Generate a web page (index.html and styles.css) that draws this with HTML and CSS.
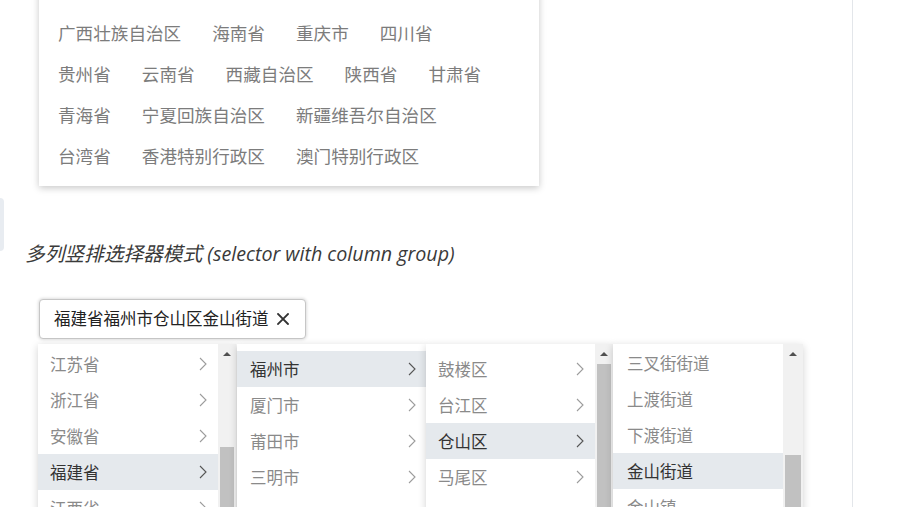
FILE: index.html
```html
<!DOCTYPE html>
<html lang="zh-CN">
<head>
<meta charset="utf-8">
<title>多列竖排选择器模式</title>
<link rel="stylesheet" href="styles.css">
</head>
<body>
<div class="page">
  <main class="content">
    <div class="card">
      <div class="card-row"><span class="opt">广西壮族自治区</span><span class="opt">海南省</span><span class="opt">重庆市</span><span class="opt">四川省</span></div>
      <div class="card-row"><span class="opt">贵州省</span><span class="opt">云南省</span><span class="opt">西藏自治区</span><span class="opt">陕西省</span><span class="opt">甘肃省</span></div>
      <div class="card-row"><span class="opt">青海省</span><span class="opt">宁夏回族自治区</span><span class="opt">新疆维吾尔自治区</span></div>
      <div class="card-row"><span class="opt">台湾省</span><span class="opt">香港特别行政区</span><span class="opt">澳门特别行政区</span></div>
    </div>

    <section class="section">
      <div class="edge-tab"></div>
      <div class="sec-body">
        <h3 class="title">多列竖排选择器模式 (selector with column group)</h3>
        <div class="tag-line">
          <div class="tag">
            <span class="tag-text">福建省福州市仓山区金山街道</span>
            <svg class="tag-x" width="12" height="12" viewBox="0 0 12 12"><path d="M1 1 L11 11 M11 1 L1 11" stroke="#333" stroke-width="1.8" fill="none" stroke-linecap="square"/></svg>
          </div>
        </div>

        <div class="columns">
          <div class="col col-1">
            <div class="list list-1">
              <div class="item"><span>江苏省</span><svg class="chev" width="8" height="14" viewBox="0 0 8 14"><path d="M1 1 L7 7 L1 13" fill="none" stroke-width="1.1"/></svg></div>
              <div class="item"><span>浙江省</span><svg class="chev" width="8" height="14" viewBox="0 0 8 14"><path d="M1 1 L7 7 L1 13" fill="none" stroke-width="1.1"/></svg></div>
              <div class="item"><span>安徽省</span><svg class="chev" width="8" height="14" viewBox="0 0 8 14"><path d="M1 1 L7 7 L1 13" fill="none" stroke-width="1.1"/></svg></div>
              <div class="item active"><span>福建省</span><svg class="chev" width="8" height="14" viewBox="0 0 8 14"><path d="M1 1 L7 7 L1 13" fill="none" stroke-width="1.1"/></svg></div>
              <div class="item"><span>江西省</span><svg class="chev" width="8" height="14" viewBox="0 0 8 14"><path d="M1 1 L7 7 L1 13" fill="none" stroke-width="1.1"/></svg></div>
            </div>
            <div class="sbar"><div class="sbar-up"><i class="tri"></i></div><div class="thumb thumb-1"></div></div>
          </div>

          <div class="col col-2">
            <div class="list list-2">
              <div class="item active"><span>福州市</span><svg class="chev" width="8" height="14" viewBox="0 0 8 14"><path d="M1 1 L7 7 L1 13" fill="none" stroke-width="1.1"/></svg></div>
              <div class="item"><span>厦门市</span><svg class="chev" width="8" height="14" viewBox="0 0 8 14"><path d="M1 1 L7 7 L1 13" fill="none" stroke-width="1.1"/></svg></div>
              <div class="item"><span>莆田市</span><svg class="chev" width="8" height="14" viewBox="0 0 8 14"><path d="M1 1 L7 7 L1 13" fill="none" stroke-width="1.1"/></svg></div>
              <div class="item"><span>三明市</span><svg class="chev" width="8" height="14" viewBox="0 0 8 14"><path d="M1 1 L7 7 L1 13" fill="none" stroke-width="1.1"/></svg></div>
            </div>
          </div>

          <div class="col col-3">
            <div class="list list-3">
              <div class="item"><span>鼓楼区</span><svg class="chev" width="8" height="14" viewBox="0 0 8 14"><path d="M1 1 L7 7 L1 13" fill="none" stroke-width="1.1"/></svg></div>
              <div class="item"><span>台江区</span><svg class="chev" width="8" height="14" viewBox="0 0 8 14"><path d="M1 1 L7 7 L1 13" fill="none" stroke-width="1.1"/></svg></div>
              <div class="item active"><span>仓山区</span><svg class="chev" width="8" height="14" viewBox="0 0 8 14"><path d="M1 1 L7 7 L1 13" fill="none" stroke-width="1.1"/></svg></div>
              <div class="item"><span>马尾区</span><svg class="chev" width="8" height="14" viewBox="0 0 8 14"><path d="M1 1 L7 7 L1 13" fill="none" stroke-width="1.1"/></svg></div>
            </div>
            <div class="sbar"><div class="sbar-up"><i class="tri"></i></div><div class="thumb thumb-3"></div></div>
          </div>

          <div class="col col-4">
            <div class="list list-4">
              <div class="item leaf"><span>三叉街街道</span></div>
              <div class="item leaf"><span>上渡街道</span></div>
              <div class="item leaf"><span>下渡街道</span></div>
              <div class="item leaf active"><span>金山街道</span></div>
              <div class="item leaf"><span>金山镇</span></div>
            </div>
            <div class="sbar sbar-wide"><div class="sbar-up"><i class="tri"></i></div><div class="thumb thumb-4"></div></div>
          </div>
        </div>
      </div>
    </section>
  </main>
  <aside class="side"></aside>
</div>
</body>
</html>
```

FILE: styles.css
```css
* { box-sizing: border-box; }

html, body {
  margin: 0;
  padding: 0;
  background: #fff;
  overflow: hidden;
}

body {
  font-family: "Noto Sans CJK SC", "Noto Sans", sans-serif;
}

.page {
  display: flex;
  height: 507px;
  overflow: hidden;
}

.content {
  width: 853px;
  flex: none;
  border-right: 1px solid #e3e6ea;
  height: 507px;
  overflow: hidden;
}

.side {
  flex: 1;
  background: #fff;
}

/* top card */
.card {
  margin: -20px 0 0 39px;
  width: 500px;
  padding: 32.5px 19px 9px;
  background: #fff;
  box-shadow: 0 2px 7px rgba(0, 0, 0, 0.22);
}

.card-row {
  display: flex;
  height: 41px;
  align-items: center;
  white-space: nowrap;
}

.opt {
  font-size: 17.6px;
  color: #7c7c7c;
  margin-right: 31px;
  line-height: 1;
}

/* section */
.section {
  display: flex;
}

.edge-tab {
  flex: none;
  width: 4px;
  height: 53px;
  margin-top: 12px;
  background: #e8ecf1;
  border-radius: 0 5px 5px 0;
}

.sec-body {
  flex: 1;
  padding-left: 21px;
  padding-top: 55px;
}

.title {
  margin: 0 0 32px;
  font-family: "Open Sans", "Noto Sans CJK SC", sans-serif;
  font-style: italic;
  font-weight: 400;
  font-size: 19.7px;
  line-height: 26px;
  color: #3a3a3a;
}

.tag-line {
  display: flex;
  padding-left: 14px;
}

.tag {
  display: flex;
  align-items: center;
  gap: 8px;
  height: 40px;
  padding: 0 16px 0 14px;
  border: 1px solid #c6c6c6;
  border-radius: 4px;
  background: #fff;
  box-shadow: 0 0 3px 1px rgba(0, 0, 0, 0.13);
}

.tag-text {
  font-size: 16.5px;
  color: #222;
  line-height: 1;
}

.tag-x { flex: none; }

/* column group */
.columns {
  display: flex;
  align-items: flex-start;
  margin-top: 5px;
  margin-left: 13px;
}

.col {
  display: flex;
  height: 190px;
  background: #fff;
  box-shadow: 0 2px 8px rgba(0, 0, 0, 0.18);
}

.col-1 { width: 198px; margin-right: 1px; }
.col-2 { width: 189px; }
.col-3 { width: 187px; }
.col-4 { width: 190px; }

.list {
  flex: 1;
  overflow: hidden;
}

.list-1 { padding-top: 2px; }
.list-2 { padding-top: 7px; }
.list-3 { padding-top: 7px; }
.list-4 { padding-top: 1px; }

.item {
  display: flex;
  align-items: center;
  justify-content: space-between;
  height: 36px;
  padding: 0 11px 0 12px;
  font-size: 16.5px;
  color: #8a8a8a;
  white-space: nowrap;
}

.col-2 .item { padding-left: 13px; padding-right: 10px; }
.col-4 .item { padding-left: 14px; }

.item .chev path { stroke: #9c9c9c; }

.item.active {
  background: #e5e9ed;
  color: #333;
}

.item.active .chev path { stroke: #555; }

/* fake scrollbars */
.sbar {
  flex: none;
  width: 18px;
  background: #f1f1f1;
  display: flex;
  flex-direction: column;
  align-items: center;
  overflow: hidden;
}

.sbar-wide { width: 20px; }

.sbar-up {
  flex: none;
  height: 20px;
  width: 100%;
  display: flex;
  align-items: center;
  justify-content: center;
}

.tri {
  display: block;
  width: 0;
  height: 0;
  border-left: 4px solid transparent;
  border-right: 4px solid transparent;
  border-bottom: 4px solid #505050;
}

.thumb {
  flex: none;
  width: 14px;
  height: 200px;
  background: #c1c1c1;
}

.thumb-1 { margin-top: 83px; }
.thumb-3 { margin-top: 0; }
.thumb-4 { margin-top: 91px; width: 16px; }
```
